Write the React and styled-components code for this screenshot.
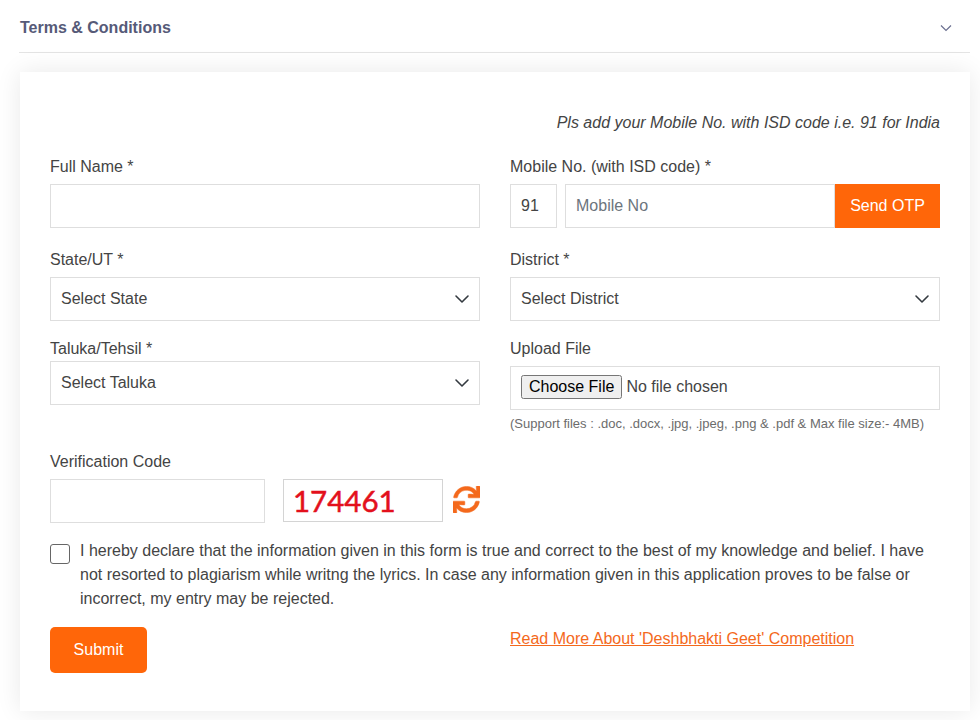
import React from "react";
import styled, { createGlobalStyle } from "styled-components";
import { FaSync } from "react-icons/fa";

const Global = createGlobalStyle`
  html, body { margin: 0; padding: 0; background: #fff; }
  body { font-family: "Liberation Sans", Arial, sans-serif; font-size: 16px; line-height: 24px; color: #444; }
`;

const chevron = `url("data:image/svg+xml,%3csvg xmlns='http://www.w3.org/2000/svg' viewBox='0 0 16 16'%3e%3cpath fill='none' stroke='%23343a40' stroke-linecap='round' stroke-linejoin='round' stroke-width='1.6' d='M2 5l6 6 6-6'/%3e%3c/svg%3e")`;

const Page = styled.div`
  width: 980px;
  height: 720px;
  overflow: hidden;
  padding: 0 10px 0 20px;
  box-sizing: border-box;
  background: #fff;
`;
const Accordion = styled.div`
  height: 53px;
  margin-left: -1px;
  box-sizing: border-box;
  border-bottom: 1px solid #e4e4e4;
  display: flex;
  align-items: center;
  justify-content: space-between;
  padding: 3px 18px 0 1px;
`;
const AccordionTitle = styled.span`
  font-weight: 700;
  color: #565a78;
  line-height: 48px;
`;
const Card = styled.form`
  margin-top: 19px;
  background: #fff;
  box-shadow: 0 0 24px rgba(0, 0, 0, 0.09);
  padding: 39px 30px 38px;
  height: 639px;
  box-sizing: border-box;
`;
const Note = styled.p`
  margin: 0 0 20px;
  font-style: italic;
  text-align: right;
  color: #444;
`;
const Row = styled.div`
  display: grid;
  grid-template-columns: 430px 430px;
  column-gap: 30px;
  align-items: start;
  margin-bottom: ${(p) => p.$gap || 0}px;
`;
const Field = styled.div`
  min-width: 0;
`;
const Label = styled.label`
  display: block;
  color: #444;
  margin-bottom: ${(p) => (p.$tight ? 0 : 5)}px;
`;
const controlBase = `
  display: block;
  box-sizing: border-box;
  height: 44px;
  border: 1px solid #dedede;
  border-radius: 0;
  background-color: #fff;
  font: 16px/24px "Liberation Sans", Arial, sans-serif;
  color: #444;
  outline: none;
`;
const Input = styled.input`
  ${controlBase}
  width: ${(p) => p.$w || "100%"};
  padding: 0 10px;
  flex: ${(p) => (p.$grow ? "1 1 0" : "none")};
  min-width: 0;
  &::placeholder { color: #6c757d; opacity: 1; }
`;
const Select = styled.select`
  ${controlBase}
  width: 100%;
  padding: 0 36px 0 10px;
  appearance: none;
  background-image: ${chevron};
  background-repeat: no-repeat;
  background-position: right 9px center;
  background-size: 16px 16px;
`;
const FileInput = styled.input`
  ${controlBase}
  width: 100%;
  padding: 8px 10px 6px;
`;
const Hint = styled.small`
  display: block;
  margin-top: 5px;
  font-size: 13px;
  line-height: 18px;
  color: #6c6c6c;
`;
const PhoneGroup = styled.div`
  display: flex;
  gap: 8px;
`;
const PhoneJoin = styled.div`
  display: flex;
  flex: 1;
  min-width: 0;
`;
const OtpButton = styled.button`
  width: 105px;
  height: 44px;
  flex: none;
  border: 0;
  background: #ff6609;
  color: #fff;
  font: 16px "Liberation Sans", Arial, sans-serif;
  padding: 0;
`;
const CaptchaRow = styled.div`
  display: flex;
  align-items: flex-start;
`;
const Captcha = styled.div`
  width: 160px;
  height: 43px;
  margin-left: 18px;
  box-sizing: border-box;
  border: 1px solid #d4d4d4;
  background: #fff;
  color: #e3101c;
  font: 400 29.5px/41px "Lato", sans-serif;
  -webkit-text-stroke: 0.5px #e3101c;
  padding-left: 9px;
`;
const Refresh = styled.button`
  border: 0;
  background: none;
  padding: 0;
  margin: 7px 0 0 10px;
  color: #f4691c;
  display: flex;
  font-size: 27px;
  & svg { stroke: currentColor; stroke-width: 10; }
`;
const Declare = styled.label`
  display: flex;
  align-items: flex-start;
  margin: 16px 0 16px;
  color: #444;
`;
const Check = styled.input`
  appearance: none;
  flex: none;
  width: 20px;
  height: 20px;
  margin: 5px 10px 0 0;
  border: 1px solid #666;
  border-radius: 3px;
  background: #fff;
`;
const Submit = styled.button`
  width: 97px;
  height: 46px;
  border: 0;
  border-radius: 5px;
  background: #ff6609;
  color: #fff;
  font: 16px "Liberation Sans", Arial, sans-serif;
  padding: 0;
`;
const MoreLink = styled.a`
  color: #f4691c;
  text-decoration: underline;
  display: block;
`;

export default function App() {
  return (
    <Page>
      <Global />
      <Accordion>
        <AccordionTitle>Terms &amp; Conditions</AccordionTitle>
        <svg width="12" height="8" viewBox="0 0 12 8" fill="none" stroke="#6b7090" strokeWidth="1.2">
          <path d="M1 1.5l5 5 5-5" />
        </svg>
      </Accordion>
      <Card onSubmit={(e) => e.preventDefault()}>
        <Note>Pls add your Mobile No. with ISD code i.e. 91 for India</Note>
        <Row $gap={20}>
          <Field>
            <Label>Full Name *</Label>
            <Input type="text" />
          </Field>
          <Field>
            <Label>Mobile No. (with ISD code) *</Label>
            <PhoneGroup>
              <Input $w="47px" defaultValue="91" />
              <PhoneJoin>
                <Input $grow placeholder="Mobile No" />
                <OtpButton type="button">Send OTP</OtpButton>
              </PhoneJoin>
            </PhoneGroup>
          </Field>
        </Row>
        <Row $gap={16}>
          <Field>
            <Label>State/UT *</Label>
            <Select defaultValue="">
              <option value="">Select State</option>
            </Select>
          </Field>
          <Field>
            <Label>District *</Label>
            <Select defaultValue="">
              <option value="">Select District</option>
            </Select>
          </Field>
        </Row>
        <Row $gap={17}>
          <Field>
            <Label $tight>Taluka/Tehsil *</Label>
            <Select defaultValue="">
              <option value="">Select Taluka</option>
            </Select>
          </Field>
          <Field>
            <Label>Upload File</Label>
            <FileInput type="file" />
            <Hint>(Support files : .doc, .docx, .jpg, .jpeg, .png &amp; .pdf &amp; Max file size:- 4MB)</Hint>
          </Field>
        </Row>
        <Field>
          <Label>Verification Code</Label>
          <CaptchaRow>
            <Input $w="215px" type="text" />
            <Captcha>174461</Captcha>
            <Refresh type="button" aria-label="Refresh code">
              <FaSync />
            </Refresh>
          </CaptchaRow>
        </Field>
        <Declare>
          <Check type="checkbox" />
          <span>
            I hereby declare that the information given in this form is true and correct to the best of my knowledge and belief. I have not resorted to plagiarism while writng the lyrics. In case any information given in this application proves to be false or incorrect, my entry may be rejected.
          </span>
        </Declare>
        <Row>
          <Field>
            <Submit type="submit">Submit</Submit>
          </Field>
          <Field>
            <MoreLink href="#">Read More About 'Deshbhakti Geet' Competition</MoreLink>
          </Field>
        </Row>
      </Card>
    </Page>
  );
}
